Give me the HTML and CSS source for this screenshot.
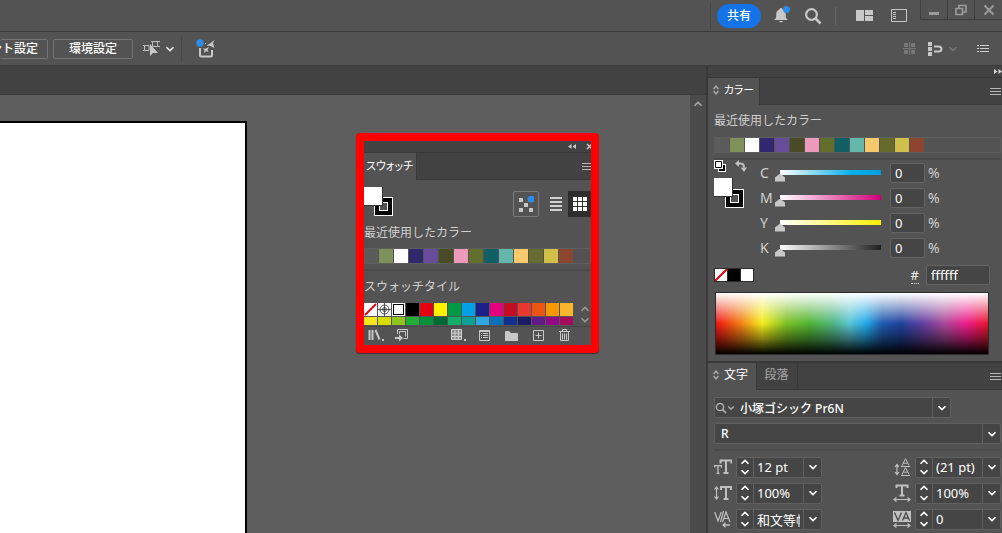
FILE: index.html
```
<!DOCTYPE html>
<html lang="ja">
<head>
    <meta charset="UTF-8">
    <meta name="viewport" content="width=device-width, initial-scale=1.0">
    <title>スウォッチ</title>
    <link rel="stylesheet" href="styles.css">
</head>
<body>
    <svg class="defs" aria-hidden="true">
        <symbol id="down" viewBox="0 0 10 6"><path d="M1.5 1.2 5 4.6 8.5 1.2" fill="none" stroke="currentColor" stroke-width="1.6"/></symbol>
        <symbol id="up" viewBox="0 0 10 6"><path d="M1.5 4.8 5 1.4 8.5 4.8" fill="none" stroke="currentColor" stroke-width="1.6"/></symbol>
        <symbol id="updown" viewBox="0 0 10 18"><path d="M1.5 5.8 5 2.4 8.5 5.8M1.5 12.2 5 15.6 8.5 12.2" fill="none" stroke="currentColor" stroke-width="1.6"/></symbol>
        <symbol id="sort" viewBox="0 0 6 10"><path d="M.5 4 3 1.2 5.5 4M.5 6 3 8.8 5.5 6" fill="none" stroke="currentColor" stroke-width="1.5"/></symbol>
        <symbol id="menu" viewBox="0 0 11 9"><path d="M0 1.500H11M0 4.500H11M0 7.500H11" stroke="currentColor"/></symbol>
        <symbol id="search" viewBox="0 0 18 18"><circle cx="7.500" cy="7.500" r="5.400" fill="none" stroke="currentColor" stroke-width="2.200"/><path d="M11.500 11.500 16.500 16.500" stroke="currentColor" stroke-width="2.600"/></symbol>
    </svg>

    <header class="appbar">
        <span class="sep"></span>
        <button class="share">共有</button>
        <button class="bell" aria-label="通知">
            <svg width="18" height="18" viewBox="0 0 18 18"><path d="M8 2c1 0 1.500.6 1.500 1.500 2.500.7 3.300 2.700 3.300 5v3l2 2.500H1.200l2-2.500v-3c0-2.300.8-4.300 3.300-5C6.500 2.600 7 2 8 2zM6 15h4c-.3 1.800-3.700 1.800-4 0z" fill="#c8c8c8"/><circle cx="13.500" cy="3.500" r="3.500" fill="#2d8ceb"/></svg>
        </button>
        <button class="find" aria-label="検索"><svg width="18" height="18"><use href="#search"/></svg></button>
        <span class="sep short"></span>
        <button class="layout" aria-label="ワークスペース">
            <svg width="17" height="11" viewBox="0 0 17 11" fill="#c8c8c8"><path d="M0 0h8v11H0zM9 0h8v5H9zM9 6h8v5H9z"/></svg>
        </button>
        <button class="docs" aria-label="ドキュメントの配置">
            <svg width="16" height="13" viewBox="0 0 16 13"><path d="M.5.5h15v12H.5z" fill="none" stroke="#c8c8c8"/><path d="M2 3h3v1H2zM2 5h3v1H2zM2 7h3v1H2zM2 9h3v1H2z" fill="#c8c8c8"/></svg>
        </button>
        <div class="winbtns">
            <button aria-label="最小化"><svg width="12" height="12" viewBox="0 0 12 12"><path d="M1 8h10v3H1z" fill="#9b9b9b"/></svg></button>
            <button aria-label="元に戻す"><svg width="12" height="12" viewBox="0 0 12 12"><path d="M4 4V1.500h7V8H8M1 4.500h6.500V10.500H1z" fill="none" stroke="#9b9b9b" stroke-width="1.700"/></svg></button>
            <button aria-label="閉じる"><svg width="12" height="12" viewBox="0 0 12 12"><path d="M1.500 1.500 10.500 10.500M10.500 1.500 1.500 10.500" stroke="#9b9b9b" stroke-width="2"/></svg></button>
        </div>
    </header>

    <div class="controlbar">
        <button class="cbtn cut">ント設定</button>
        <button class="cbtn">環境設定</button>
        <button class="select-tool" aria-label="類似オブジェクトを選択">
            <svg width="17" height="17" viewBox="0 0 17 17"><path d="M1.500 5.500h4.500v5H1.500zM9.500 1.500h5v5h-5zM0 5.500h1.500M0 10.500h1.500M8 1.500h1.500M14.500 1.500H17M14.500 6.500H17" fill="none" stroke="#bdbdbd"/><path d="M7 4v12l3-3h5z" fill="#c8c8c8"/></svg>
            <svg width="10" height="6"><use href="#down"/></svg>
        </button>
        <span class="sep"></span>
        <button class="ai" aria-label="生成">
            <svg width="20" height="20" viewBox="0 0 20 20"><path d="M4 9v7.500q0 1 1 1h10q1 0 1-1V11" fill="none" stroke="#c8c8c8" stroke-width="2"/><path d="M18.500 1 17 4.500 18.500 9 14.500 7 10.500 6.500 14 4.500zM13 8l-1.500 3 1 2-2.500-.7L8 14l.5-3L6.500 9.500l3 .2z" fill="#c8c8c8"/><circle cx="4" cy="4" r="3.700" fill="#2d8ceb"/><path d="M9 4h1v1H9z" fill="#c8c8c8"/></svg>
        </button>
        <div class="right-tools">
            <button aria-label="グリッド"><svg width="13" height="13" viewBox="0 0 13 13" fill="#787878"><path d="M1 1h4v4H1zM8 1h4v4H8zM1 8h4v4H1zM8 8h4v4H8zM6 0h1v13H6zM0 6h13v1H0z"/></svg></button>
            <button class="snap" aria-label="スナップ"><svg width="15" height="14" viewBox="0 0 15 14"><path d="M0 0h4v4H0zM0 5h4v4H0zM0 10h4v4H0z" fill="#c8c8c8"/><path d="M6 4.500h4.500q3 0 3 2.500t-3 2.500H6" fill="none" stroke="#c8c8c8" stroke-width="2"/></svg><svg class="faint" width="10" height="6"><use href="#down"/></svg></button>
            <button aria-label="メニュー"><svg width="12" height="9" viewBox="0 0 12 9"><path d="M0 1.500h2M3 1.500h9M0 4.500h2M3 4.500h9M0 7.500h2M3 7.500h9" stroke="#d0d0d0"/></svg></button>
        </div>
    </div>

    <div class="main">
        <div class="workspace">
            <div class="doctabs"></div>
            <div class="canvas">
                <div class="artboard"></div>
                <div class="scrollbar"><svg width="10" height="6"><use href="#up"/></svg></div>

                <section class="floating">
                    <div class="panel-head">
                        <svg width="8" height="5" viewBox="0 0 8 5"><path d="M3.500 0v5L0 2.500zM8 0v5L4.500 2.500z" fill="#c8c8c8"/></svg>
                        <svg width="7" height="7" viewBox="0 0 7 7"><path d="M1 1l5 5M6 1 1 6" stroke="#c8c8c8" stroke-width="1.500"/></svg>
                    </div>
                    <div class="tabs"><button class="tab active">スウォッチ</button><button class="menu" aria-label="パネルメニュー"><svg width="11" height="9"><use href="#menu"/></svg></button></div>
                    <div class="swatch-body">
                        <div class="toolrow">
                            <div class="fillstroke"><span class="stroke"></span><span class="fill"></span></div>
                            <button class="iconbtn framed" aria-label="生成再配色"><svg width="16" height="16" viewBox="0 0 16 16"><path d="M1 2h4v4H1zM6 7h4v4H6zM1 12h4v4H1zM11 12h4v4h-4z" fill="#c8c8c8"/><circle cx="13" cy="3" r="3.500" fill="#2d8ceb"/></svg></button>
                            <button class="iconbtn" aria-label="リスト"><svg width="12" height="14" viewBox="0 0 12 14"><path d="M0 1h12M0 5h12M0 9h12M0 13h12" stroke="#d0d0d0" stroke-width="2"/></svg></button>
                            <button class="iconbtn on" aria-label="サムネール"><svg width="14" height="14" viewBox="0 0 14 14"><path d="M0 0h4v4H0zM5 0h4v4H5zM10 0h4v4h-4zM0 5h4v4H0zM5 5h4v4H5zM10 5h4v4h-4zM0 10h4v4H0zM5 10h4v4H5zM10 10h4v4h-4z" fill="#fff"/></svg></button>
                        </div>
                        <h2>最近使用したカラー</h2>
                        <div class="recent"></div>
                        <hr>
                        <h2 class="tile-title">スウォッチタイル</h2>
                        <div class="tilebox">
                            <div class="tiles" id="tiles">
                                <svg viewBox="0 0 13 13"><path d="M0 0h13v13H0z" fill="#fff"/><path d="M1 12 12 1" stroke="#e60012" stroke-width="2"/></svg>
                                <svg viewBox="0 0 13 13"><path d="M0 0h13v13H0z" fill="#f4f4f4"/><g fill="none" stroke="#333" stroke-width=".8"><circle cx="6.500" cy="6.500" r="4.500"/><circle cx="6.500" cy="6.500" r="2"/><path d="M6.500 0v13M0 6.500h13"/></g></svg>
                                <span class="selected"></span>
                            </div>
                            <div class="tilescroll"><svg width="10" height="6"><use href="#up"/></svg><svg width="10" height="6"><use href="#down"/></svg></div>
                        </div>
                        <div class="footer">
                            <button aria-label="ライブラリ"><svg width="17" height="13" viewBox="0 0 17 13"><path d="M1.500 1v10M4.500 1v10M7.500 1l4 9.500" stroke="#c8c8c8" stroke-width="2"/><path d="M14 10h2v2h-2z" fill="#c8c8c8"/></svg></button>
                            <button aria-label="追加"><svg width="14" height="13" viewBox="0 0 14 13"><path d="M2.500 5V.5h10v9H8.500M4.500 5V2.500h6v5" fill="none" stroke="#c8c8c8"/><path d="M0 8h4V5.500L8 9l-4 3.500V10H0z" fill="#c8c8c8"/></svg></button>
                            <button class="kind" aria-label="種類"><svg width="16" height="13" viewBox="0 0 16 13"><path d="M.5.5h10v10H.5zM.5 4h10M.5 7.500h10M4 .5v10M7.500.5v10" fill="#8a8a8a" stroke="#d0d0d0"/><path d="M13 10h2v2h-2z" fill="#c8c8c8"/></svg></button>
                            <button aria-label="オプション"><svg width="11" height="11" viewBox="0 0 11 11"><path d="M.5.5h10v10H.5zM2 3.500h1M4 3.500h5M2 5.500h1M4 5.500h5M2 7.500h1M4 7.500h5M.5 1.500h10" fill="none" stroke="#c8c8c8"/></svg></button>
                            <button aria-label="フォルダー"><svg width="13" height="10" viewBox="0 0 13 10"><path d="M0 1q0-1 1-1h3l2 2h6q1 0 1 1v7H0z" fill="#c8c8c8"/></svg></button>
                            <button aria-label="新規"><svg width="11" height="11" viewBox="0 0 11 11"><path d="M.5.5h10v10H.5zM5.500 2.500v6M2.500 5.500h6" fill="none" stroke="#c8c8c8"/></svg></button>
                            <button aria-label="削除"><svg width="11" height="13" viewBox="0 0 11 13"><path d="M0 2.500h11M3.500 2.500v-2h4v2M1.500 2.500v9h8v-9M3.500 4.500v6M5.500 4.500v6M7.500 4.500v6" fill="none" stroke="#c8c8c8"/></svg></button>
                        </div>
                    </div>
                </section>
            </div>
        </div>

        <aside class="dock">
            <div class="panel-head"><svg width="8" height="5" viewBox="0 0 8 5"><path d="M0 0l3.500 2.500L0 5zM4.500 0 8 2.500 4.500 5z" fill="#d8d8d8"/></svg></div>
            <section class="color-panel">
                <div class="tabs"><button class="tab active"><svg width="6" height="10"><use href="#sort"/></svg>カラー</button><button class="menu" aria-label="パネルメニュー"><svg width="11" height="9"><use href="#menu"/></svg></button></div>
                <div class="panel-body">
                    <h2>最近使用したカラー</h2>
                    <div class="recent"></div>
                    <hr>
                    <div class="mixer">
                        <div class="mixer-left">
                            <div class="mini">
                                <svg width="12" height="12" viewBox="0 0 12 12"><path d="M4 4h8v8H4z" fill="#fff"/><path d="M5 5h6v6H5z" fill="#000"/><path d="M7 7h2v2H7z" fill="#fff"/><path d="M0 0h9v9H0z" fill="#fff"/><path d="M1.500 1.500h6v6h-6z" fill="#fff" stroke="#000"/></svg>
                                <svg width="12" height="12" viewBox="0 0 12 12"><path d="M2 3.500h3.500q3.500 0 3.500 4" fill="none" stroke="#c0c0c0" stroke-width="2"/><path d="M4 0v7L0 3.500zM5.500 7.500H12L9 12z" fill="#c0c0c0"/></svg>
                            </div>
                            <div class="fillstroke"><span class="stroke"></span><span class="fill"></span></div>
                        </div>
                        <div class="sliders">
                            <div class="channel cyan"><label for="c">C</label><input type="range" id="c" value="0"><input class="field" type="text" value="0" aria-label="C"><span>%</span></div>
                            <div class="channel magenta"><label for="m">M</label><input type="range" id="m" value="0"><input class="field" type="text" value="0" aria-label="M"><span>%</span></div>
                            <div class="channel yellow"><label for="y">Y</label><input type="range" id="y" value="0"><input class="field" type="text" value="0" aria-label="Y"><span>%</span></div>
                            <div class="channel black"><label for="k">K</label><input type="range" id="k" value="0"><input class="field" type="text" value="0" aria-label="K"><span>%</span></div>
                        </div>
                    </div>
                    <div class="hexrow">
                        <div class="basic"><svg width="12" height="12" viewBox="0 0 12 12"><path d="M0 0h12v12H0z" fill="#fff"/><path d="M0 12 12 0" stroke="#e60012" stroke-width="2"/></svg><span class="k"></span><span class="w"></span></div>
                        <label for="hex">#</label>
                        <input class="field" type="text" id="hex" value="ffffff">
                    </div>
                    <div class="spectrum"></div>
                </div>
            </section>

            <section class="type-panel">
                <div class="tabs"><button class="tab active"><svg width="6" height="10"><use href="#sort"/></svg>文字</button><button class="tab">段落</button><button class="menu" aria-label="パネルメニュー"><svg width="11" height="9"><use href="#menu"/></svg></button></div>
                <div class="panel-body">
                    <div class="combo family">
                        <svg class="dim" width="12" height="12"><use href="#search"/></svg><svg class="dim" width="8" height="6"><use href="#down"/></svg>
                        <input type="text" value="小塚ゴシック Pr6N" aria-label="フォント">
                        <button aria-label="フォント一覧"><svg width="10" height="6"><use href="#down"/></svg></button>
                    </div>
                    <div class="combo">
                        <input class="style" type="text" value="R" aria-label="スタイル">
                        <button aria-label="スタイル一覧"><svg width="10" height="6"><use href="#down"/></svg></button>
                    </div>
                    <hr>
                    <div class="metrics">
                        <div class="metric">
                            <svg width="18" height="16" viewBox="0 0 18 16" fill="none" stroke="#c0c0c0"><path d="M6.500 4.500V1.500H17.500V4.500M12 1.500V14M9.500 14h5" stroke-width="2"/><path d="M.7 8.500V6.700h6.600v1.800M4 7v7M2.500 14.300h3" stroke-width="1.300"/></svg>
                            <div class="combo"><button class="step" aria-label="増減"><svg width="10" height="18"><use href="#updown"/></svg></button><input type="text" value="12 pt" aria-label="フォントサイズ"><button aria-label="選択"><svg width="10" height="6"><use href="#down"/></svg></button></div>
                        </div>
                        <div class="metric">
                            <svg width="18" height="18" viewBox="0 0 18 18" fill="none" stroke="#c0c0c0"><path d="M4 7v9M2 9l2-2.500L6 9M2 14l2 2.500L6 14M8 8.500h9M8 17.500h9" stroke-width="1.200"/><path d="M9 7.500 12.500.7 16 7.500M10.300 5.200h4.400M9 16.500l3.500-6.800 3.500 6.800M10.300 14.200h4.400"/></svg>
                            <div class="combo"><button class="step" aria-label="増減"><svg width="10" height="18"><use href="#updown"/></svg></button><input type="text" value="(21 pt)" aria-label="行送り"><button aria-label="選択"><svg width="10" height="6"><use href="#down"/></svg></button></div>
                        </div>
                        <div class="metric">
                            <svg width="18" height="16" viewBox="0 0 18 16" fill="none" stroke="#c0c0c0"><path d="M2.500 2v12M.5 4.500l2-2.500 2 2.500M.5 11.500l2 2.500 2-2.500" stroke-width="1.200"/><path d="M7 5V2h10v3M12 2v12M9.500 14h5" stroke-width="2"/></svg>
                            <div class="combo"><button class="step" aria-label="増減"><svg width="10" height="18"><use href="#updown"/></svg></button><input type="text" value="100%" aria-label="垂直比率"><button aria-label="選択"><svg width="10" height="6"><use href="#down"/></svg></button></div>
                        </div>
                        <div class="metric">
                            <svg width="18" height="18" viewBox="0 0 18 18" fill="none" stroke="#c0c0c0"><path d="M3.500 4V1.500h11V4M9 1.500v9.500M6.500 11.500h5" stroke-width="2"/><path d="M1 15.500h16M3.500 13.500l-2.500 2 2.500 2M14.500 13.500l2.500 2-2.500 2" stroke-width="1.200"/></svg>
                            <div class="combo"><button class="step" aria-label="増減"><svg width="10" height="18"><use href="#updown"/></svg></button><input type="text" value="100%" aria-label="水平比率"><button aria-label="選択"><svg width="10" height="6"><use href="#down"/></svg></button></div>
                        </div>
                        <div class="metric">
                            <svg width="18" height="18" viewBox="0 0 18 18" fill="none" stroke="#c0c0c0"><path d="M.7 2 4 11 7.300 2M9.500 1 6.500 12M8.500 12 12 2l4 10M9.800 8.500h4.700" stroke-width="1.200"/><path d="M16 15H9M11.500 12.800 9 15l2.500 2.200" stroke-width="1.300"/></svg>
                            <div class="combo"><button class="step" aria-label="増減"><svg width="10" height="18"><use href="#updown"/></svg></button><input type="text" value="和文等幅" aria-label="カーニング"><button aria-label="選択"><svg width="10" height="6"><use href="#down"/></svg></button></div>
                        </div>
                        <div class="metric">
                            <svg width="18" height="18" viewBox="0 0 18 18" fill="none"><path d="M0 1h18v11H0z" fill="#c0c0c0"/><path d="M1.500 2.500 5 10.500 8.500 2.500M9.500 10.500 13 2.500l3.500 8M10.800 8h4.400" stroke="#484848" stroke-width="1.300"/><path d="M1 15.500h16M3.500 13.500l-2.500 2 2.500 2M14.500 13.500l2.500 2-2.500 2" stroke="#c0c0c0" stroke-width="1.200"/></svg>
                            <div class="combo"><button class="step" aria-label="増減"><svg width="10" height="18"><use href="#updown"/></svg></button><input type="text" value="0" aria-label="トラッキング"><button aria-label="選択"><svg width="10" height="6"><use href="#down"/></svg></button></div>
                        </div>
                    </div>
                </div>
            </section>
        </aside>
    </div>

    <script>
        const recentColors = ['#5b5b5b', '#7f915b', '#ffffff', '#30276f', '#664c99', '#484b25', '#ed9aba', '#646e2c',
            '#105f65', '#65b7ac', '#f8c86c', '#666a2c', '#d0bf48', '#8c4630'];
        const tileColors = ['#000000', '#e60012', '#fff100', '#009944', '#00a0e9', '#1d2088', '#e4007f', '#c30d23',
            '#e8382f', '#ea5514', '#f39800', '#f9b52c',
            '#f5e51b', '#d9dc00', '#8fc31f', '#22ac38', '#009139', '#006934', '#13ae67', '#0da095', '#2ea7e0',
            '#0b72ba', '#10308e', '#1b1c62', '#601986', '#920783', '#a40b5d'];

        function addSwatches(box, colors) {
            colors.forEach(function(color) {
                const swatch = document.createElement('span');
                swatch.style.backgroundColor = color;
                box.appendChild(swatch);
            });
        }

        document.querySelectorAll('.recent').forEach(function(box) {
            addSwatches(box, recentColors);
        });
        addSwatches(document.getElementById('tiles'), tileColors);
    </script>
</body>
</html>
```
FILE: styles.css
```
* {
    box-sizing: border-box;
}

body {
    margin: 0;
    height: 100vh;
    overflow: hidden;
    display: flex;
    flex-direction: column;
    background-color: #535353;
    color: #d0d0d0;
    font-family: "Noto Sans", "Noto Sans CJK JP", sans-serif;
    font-size: 12px;
    line-height: 16px;
}

svg {
    display: block;
    flex: none;
}

.defs {
    position: absolute;
    width: 0;
    height: 0;
}

button,
input {
    font: inherit;
    color: inherit;
    margin: 0;
    padding: 0;
    border: 0;
    background: none;
    min-width: 0;
}

button {
    display: flex;
    align-items: center;
    justify-content: center;
    white-space: nowrap;
}

h2 {
    margin: 0;
    font-size: 12px;
    font-weight: normal;
    line-height: 16px;
}

hr {
    margin: 0;
    border: 0;
    height: 2px;
    background-color: #4a4a4a;
}

/* top bars */
.appbar {
    flex: none;
    height: 32px;
    display: flex;
    align-items: center;
    justify-content: flex-end;
    border-bottom: 1px solid #3b3b3b;
}

.sep {
    width: 1px;
    height: 26px;
    background-color: #484848;
}

.sep.short {
    height: 18px;
    background-color: #666;
}

.share {
    width: 44px;
    height: 24px;
    margin: 0 10px 0 6px;
    border-radius: 12px;
    background-color: #1473e6;
    color: #fff;
    font-weight: 500;
}

.bell {
    padding: 0 0 2px;
    margin: 0 13px 0 2px;
}

.find {
    color: #c8c8c8;
    margin-right: 13px;
}

.layout {
    margin: 0 18px 0 20px;
}

.docs {
    margin-right: 13px;
}

.winbtns {
    display: flex;
    align-self: flex-start;
    height: 20px;
    border: 1px solid #3e3e3e;
    border-width: 0 0 1px 1px;
}

.winbtns button {
    width: 27px;
    border-right: 1px solid #3e3e3e;
}

.winbtns button:last-child {
    border-right: 0;
}

.controlbar {
    flex: none;
    height: 34px;
    display: flex;
    align-items: center;
    border-bottom: 1px solid #3b3b3b;
}

.cbtn {
    width: 80px;
    height: 20px;
    margin-right: 10px;
    border: 1px solid #757575;
    border-radius: 2px;
    color: #fff;
    font-weight: 500;
}

.cbtn.cut {
    width: 48px;
    margin-right: 5px;
    padding-right: 9px;
    border-left: 0;
    justify-content: flex-end;
    overflow: hidden;
}

.select-tool {
    gap: 5px;
    color: #eee;
    margin-right: 6px;
}

.ai {
    margin-left: 14px;
}

.right-tools {
    display: flex;
    align-items: center;
    gap: 12px;
    margin-left: auto;
    padding-right: 13px;
}

.snap {
    gap: 5px;
    margin-right: 7px;
}

.faint {
    color: #777;
}

/* document area */
.main {
    flex: 1;
    min-height: 0;
    display: flex;
}

.workspace {
    flex: 1;
    min-width: 0;
    display: flex;
    flex-direction: column;
}

.doctabs {
    height: 29px;
    flex: none;
    background-color: #424242;
    border-bottom: 1px solid #3a3a3a;
}

.canvas {
    flex: 1;
    position: relative;
    display: flex;
    background-color: #5e5e5e;
}

.artboard {
    width: 247px;
    margin-top: 26px;
    background-color: #fff;
    border: 2px solid #000;
    border-width: 2px 2px 0 0;
}

.scrollbar {
    width: 16px;
    margin-left: auto;
    padding: 6px 3px;
    background-color: #4b4b4b;
    color: #a5a5a5;
}

/* the floating panel lies over the canvas */
.floating {
    position: absolute;
    left: 356px;
    top: 38px;
    width: 243px;
    height: 220px;
    overflow: hidden;
    border: 8px solid #f00;
    border-radius: 4px;
    background-color: #535353;
    box-shadow: 0 1px 1px #333;
}

.panel-head {
    display: flex;
    align-items: center;
    justify-content: flex-end;
    gap: 10px;
    height: 12px;
    padding-right: 0;
    background-color: #424242;
    border-bottom: 1px solid #383838;
}

.floating .panel-head {
    margin-right: -2px;
}

.tabs {
    display: flex;
    height: 27px;
    background-color: #424242;
}

.tab {
    gap: 5px;
    padding: 0 8px 3px 5px;
    color: #a8a8a8;
    font-feature-settings: "palt";
    border-right: 1px solid #383838;
    border-bottom: 1px solid #383838;
}

.tab svg {
    color: #a8a8a8;
}

.tab.active {
    background-color: #535353;
    color: #fff;
    border-bottom: 0;
}

.menu {
    flex: 1;
    justify-content: flex-end;
    padding-right: 1px;
    border-bottom: 1px solid #383838;
    color: #b8b8b8;
}

.color-panel .tab {
    width: 52px;
    padding-right: 5px;
    font-size: 11px;
}

.floating .tab {
    width: 53px;
    padding: 0 3px 3px 2px;
    font-size: 11px;
    font-family: "Noto Sans CJK JP", sans-serif;
}

.floating .menu {
    padding-right: 0;
    margin-right: -2px;
}

.toolrow {
    display: flex;
    height: 45px;
    padding-top: 7px;
}

.fillstroke {
    position: relative;
    width: 29px;
    height: 29px;
    margin-right: auto;
}

.fill,
.stroke {
    position: absolute;
    width: 19px;
    height: 19px;
}

.fill {
    left: 0;
    top: 0;
    background-color: #fff;
    border: 1px solid #333;
    border-width: 0 1px 1px 0;
}

.stroke {
    right: 0;
    bottom: 0;
    background-color: #535353;
    border: 1px solid #fff;
    box-shadow: inset 0 0 0 4px #000, inset 0 0 0 5px #fff;
}

.iconbtn {
    width: 24px;
    height: 26px;
    margin-top: 4px;
}

.iconbtn.framed {
    width: 26px;
    margin-right: 5px;
    border: 1px solid #7a7a7a;
    border-radius: 2px;
}

.iconbtn.on {
    width: 23px;
    background-color: #2e2e2e;
}

.swatch-body h2 {
    white-space: nowrap;
}

.recent {
    display: flex;
    gap: 1px;
    height: 16px;
    border: 1px solid #5e5e5e;
    border-left: 0;
}

.recent span {
    width: 14px;
    flex: none;
}

.swatch-body .recent {
    margin: 7px 0 5px;
}

.tile-title {
    padding: 8px 0 7px;
    height: 31px;
}

.tilebox {
    display: flex;
    justify-content: space-between;
    height: 25px;
    padding-top: 1px;
    border-bottom: 1px solid #474747;
}

.tiles {
    display: grid;
    grid-template-columns: repeat(15, 13px);
    grid-auto-rows: 13px;
    gap: 1px;
    height: 22px;
    overflow: hidden;
}

.tiles .selected {
    background-color: #fff;
    border: 1px solid #fff;
    box-shadow: inset 0 0 0 1px #000;
}

.tilescroll {
    display: flex;
    flex-direction: column;
    justify-content: space-between;
    padding: 3px 1px 3px 0;
    color: #999;
}

.footer {
    display: flex;
    align-items: center;
    gap: 15px;
    height: 17px;
    padding: 0 21px 0 4px;
}

.footer button:first-child {
    margin-right: -5px;
}

.footer .kind {
    margin-left: auto;
    margin-right: -3px;
}

/* right dock */
.dock {
    flex: none;
    width: 296px;
    border-left: 2px solid #383838;
}

.panel-body {
    padding: 8px 1px 0 6px;
}

.color-panel {
    border-bottom: 2px solid #383838;
    padding-bottom: 6px;
}

.color-panel .recent {
    margin: 8px 0 5px;
}

.color-panel .recent span:first-child {
    width: 15px;
}

.mixer {
    display: flex;
}

.mixer-left {
    width: 46px;
}

.mini {
    display: flex;
    gap: 9px;
    height: 18px;
}

.mixer .fillstroke {
    width: 30px;
    height: 30px;
}

.channel {
    display: flex;
    align-items: center;
    height: 25px;
    font-size: 14px;
}

.channel label {
    width: 15px;
}

.channel input[type="range"] {
    appearance: none;
    width: 111px;
    height: 14px;
    margin-top: 8px;
    background: linear-gradient(to right, #fff, var(--ink)) center top / calc(100% - 10px) 5px no-repeat;
}

.channel input[type="range"]::-webkit-slider-runnable-track {
    height: 14px;
}

.channel input[type="range"]::-webkit-slider-thumb {
    appearance: none;
    width: 10px;
    height: 8px;
    margin-top: 4px;
    background-color: #c8c8c8;
    clip-path: polygon(50% 0, 100% 50%, 100% 100%, 0 100%, 0 50%);
}

.cyan {
    --ink: #0cb0e8 70%, #009fdf;
}

.magenta {
    --ink: #d00078;
}

.yellow {
    --ink: #fff000;
}

.black {
    --ink: #202020;
}

.field {
    height: 20px;
    padding: 0 4px;
    background-color: #454545;
    border: 1px solid #646464;
    border-radius: 2px;
    color: #fff;
    font-size: 13px;
}

.channel .field {
    width: 35px;
    margin: 0 3px 0 4px;
}

.hexrow {
    display: flex;
    align-items: center;
    gap: 7px;
    padding: 5px 11px 0 0;
}

.basic {
    display: flex;
    gap: 1px;
    padding: 1px;
    margin-right: auto;
    background-color: #2c2c2c;
}

.basic span {
    width: 12px;
    height: 12px;
}

.basic .k {
    background-color: #000;
}

.basic .w {
    background-color: #fff;
}

.hexrow label {
    color: #eee;
    font-size: 13px;
    border-bottom: 1px dotted #ddd;
}

.hexrow .field {
    width: 64px;
}

.spectrum {
    height: 63px;
    margin: 7px 12px 0 1px;
    border: 1px solid #2c2c2c;
    background:
        linear-gradient(to bottom, #fff, rgba(255, 255, 255, 0) 50%),
        linear-gradient(to bottom, rgba(0, 0, 0, 0) 50%, rgba(0, 0, 0, .45) 75%, #000),
        linear-gradient(to right, #f01414, #f27c12 9%, #f4ec1c 17%, #7cbf24 26%, #50b432 34%, #50b482 43%, #5ac4d0 49%, #22aaea 55%, #1f5cb0 61%, #1f419c 68%, #633fa0 76%, #a84898 84%, #ee1c8c 92%, #e8142c);
}

.type-panel .tab:not(.active) {
    width: 41px;
    padding-left: 7px;
}

.type-panel .panel-body {
    padding-top: 7px;
}

.combo {
    display: flex;
    align-items: center;
    height: 21px;
    margin-bottom: 5px;
    background-color: #454545;
    border: 1px solid #606060;
    border-radius: 2px;
    color: #fff;
}

.combo input {
    flex: 1;
    height: 19px;
    padding: 0 3px;
}

.combo button {
    flex: none;
    width: 18px;
    height: 19px;
    border-left: 1px solid #606060;
}

.combo .dim {
    color: #b0b0b0;
}

.family {
    width: 237px;
    font-weight: 500;
}

.family input {
    padding-left: 5px;
}

.combo .style {
    padding-left: 6px;
    font-weight: 500;
}

.metrics {
    display: flex;
    flex-wrap: wrap;
    justify-content: space-between;
    padding-top: 3px;
}

.metric {
    display: flex;
    align-items: center;
    gap: 4px;
    height: 26px;
}

.metric .combo {
    width: 86px;
    margin: 0;
    font-size: 13px;
}

.metric .combo .step {
    width: 17px;
    border-left: 0;
    border-right: 1px solid #606060;
}
```
